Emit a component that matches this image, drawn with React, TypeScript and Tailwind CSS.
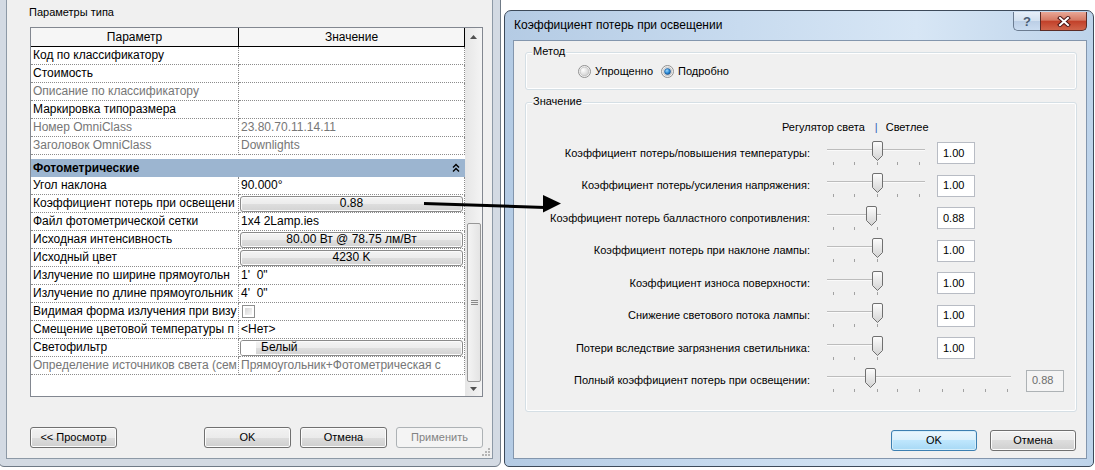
import React from "react";

const btn =
  "flex h-[21px] items-center justify-center rounded-[3px] border border-[#707070] bg-[linear-gradient(to_bottom,#f2f2f2_0%,#ebebeb_50%,#dddddd_50%,#cfcfcf_100%)] shadow-[inset_0_0_0_1px_#fcfcfc] text-[11px] leading-[13px] text-black";

const cellBtn =
  "mx-px flex h-[16px] flex-1 items-center rounded-[3px] border border-[#8a8a8a] bg-[linear-gradient(to_bottom,#f4f4f4_0%,#ececec_50%,#dedede_50%,#d3d3d3_100%)] shadow-[inset_0_0_0_1px_#fbfbfb]";

function GridRow({ label, muted, children }: { label: string; muted?: boolean; children?: React.ReactNode }) {
  const tone = muted ? "text-[#767676]" : "text-black";
  return (
    <div className="flex h-[18px] text-[12px] leading-[17px]">
      <div className={`w-[208px] shrink-0 overflow-hidden whitespace-nowrap border-b border-r border-dotted border-[#8c8c8c] pl-[2px] ${tone}`}>
        {label}
      </div>
      <div className={`flex min-w-0 flex-1 items-center overflow-hidden whitespace-nowrap border-b border-r border-dotted border-[#8c8c8c] ${tone}`}>
        {children}
      </div>
    </div>
  );
}

function Val({ children }: { children: React.ReactNode }) {
  return <span className="pl-[2px]">{children}</span>;
}

function CellButton({ children }: { children: React.ReactNode }) {
  return <div className={`${cellBtn} justify-center`}>{children}</div>;
}

function Scrollbar() {
  return (
    <div className="flex w-[17px] shrink-0 flex-col bg-[linear-gradient(to_right,#e6e6e6,#f4f4f4)]">
      <div className="flex h-[17px] items-center justify-center">
        <svg width="7" height="4" className="block">
          <path d="M0 4 L3.5 0 L7 4Z" fill="#505050" />
        </svg>
      </div>
      <div className="flex flex-1 flex-col justify-end pl-[2px] pr-[1px]">
        <div className="flex h-[159px] items-center justify-center rounded-[2px] border border-[#979797] bg-[linear-gradient(to_right,#f4f4f4,#e4e4e4)]">
          <svg width="7" height="5" className="block">
            <path d="M0 0.5 H7 M0 2.5 H7 M0 4.5 H7" stroke="#8a8a8a" strokeWidth="1" />
          </svg>
        </div>
      </div>
      <div className="flex h-[14px] items-center justify-center">
        <svg width="7" height="4" className="block">
          <path d="M0 0 L3.5 4 L7 0Z" fill="#505050" />
        </svg>
      </div>
    </div>
  );
}

function TypeWindow() {
  return (
    <div className="absolute left-[-2px] top-[-10px] h-[477px] w-[503px] rounded-b-[6px] border border-[#6f7a86] bg-[#d3dae3] p-[7px]">
      <div className="relative flex h-full flex-col border border-[#8d99a6] bg-[#f0f0f0] pl-[23px] pr-[9px]">
        <div className="-ml-px mt-[7px] text-[11px] leading-[13px]">Параметры типа</div>
        <div className="mt-[8px] flex h-[370px] border border-[#828790] bg-white">
          <div className="flex w-[434px] shrink-0 flex-col">
            <div className="flex h-[19px] border-b border-black bg-[#f6f6f6] text-[12px] leading-[18px]">
              <div className="w-[208px] shrink-0 border-r border-black text-center">Параметр</div>
              <div className="flex-1 border-r border-black text-center">Значение</div>
            </div>
            <GridRow label="Код по классификатору" />
            <GridRow label="Стоимость" />
            <GridRow label="Описание по классификатору" muted />
            <GridRow label="Маркировка типоразмера" />
            <GridRow label="Номер OmniClass" muted>
              <Val>23.80.70.11.14.11</Val>
            </GridRow>
            <GridRow label="Заголовок OmniClass" muted>
              <Val>Downlights</Val>
            </GridRow>
            <div className="mt-[4px] flex h-[18px] items-center justify-between bg-[#9cb5d0] pl-[2px] pr-[5px] text-[12px] font-bold leading-[17px]">
              <span>Фотометрические</span>
              <svg width="8" height="10" className="block">
                <path d="M1 4.5 L4 1.5 L7 4.5 M1 8.5 L4 5.5 L7 8.5" stroke="#000" strokeWidth="1.4" fill="none" />
              </svg>
            </div>
            <GridRow label="Угол наклона">
              <Val>90.000°</Val>
            </GridRow>
            <GridRow label="Коэффициент потерь при освещени">
              <CellButton>0.88</CellButton>
            </GridRow>
            <GridRow label="Файл фотометрической сетки">
              <Val>1x4 2Lamp.ies</Val>
            </GridRow>
            <GridRow label="Исходная интенсивность">
              <CellButton>80.00 Вт @ 78.75 лм/Вт</CellButton>
            </GridRow>
            <GridRow label="Исходный цвет">
              <CellButton>4230 K</CellButton>
            </GridRow>
            <GridRow label="Излучение по ширине прямоугольн">
              <Val>1'&nbsp;&nbsp;0"</Val>
            </GridRow>
            <GridRow label="Излучение по длине прямоугольник">
              <Val>4'&nbsp;&nbsp;0"</Val>
            </GridRow>
            <GridRow label="Видимая форма излучения при визу">
              <div className="ml-[3px] h-[13px] w-[13px] border border-[#8e8f8f] bg-white p-[2px]">
                <div className="h-full w-full bg-[linear-gradient(135deg,#d6d6d6,#f7f7f7)]" />
              </div>
            </GridRow>
            <GridRow label="Смещение цветовой температуры п">
              <Val>&lt;Нет&gt;</Val>
            </GridRow>
            <GridRow label="Светофильтр">
              <div className={cellBtn}>
                <div className="h-full w-[15px] rounded-l-[2px] bg-white" />
                <span className="pl-[5px]">Белый</span>
              </div>
            </GridRow>
            <GridRow label="Определение источников света (сем" muted>
              <Val>Прямоугольник+Фотометрическая с</Val>
            </GridRow>
          </div>
          <Scrollbar />
        </div>
        <div className="mt-[30px] flex items-center">
          <div className={`${btn} w-[87px]`}>&lt;&lt; Просмотр</div>
          <div className={`${btn} ml-auto w-[87px]`}>OK</div>
          <div className={`${btn} ml-[9px] w-[87px]`}>Отмена</div>
          <div className="ml-[9px] flex h-[21px] w-[87px] items-center justify-center rounded-[3px] border border-[#adb2b5] bg-[#f4f4f4] text-[11px] text-[#838383]">
            Применить
          </div>
        </div>
        <svg width="10" height="10" className="absolute bottom-[1px] right-[1px] block">
          <g fill="#b5b5b5">
            <rect x="7" y="1" width="2" height="2" />
            <rect x="4" y="4" width="2" height="2" />
            <rect x="7" y="4" width="2" height="2" />
            <rect x="1" y="7" width="2" height="2" />
            <rect x="4" y="7" width="2" height="2" />
            <rect x="7" y="7" width="2" height="2" />
          </g>
        </svg>
      </div>
    </div>
  );
}

function Radio({ checked }: { checked?: boolean }) {
  return (
    <svg width="13" height="13" viewBox="0 0 13 13" className="block shrink-0">
      <defs>
        <radialGradient id="radioIn" cx="0.35" cy="0.35" r="0.8">
          <stop offset="0" stopColor="#ffffff" />
          <stop offset="1" stopColor="#c9c9c9" />
        </radialGradient>
        <radialGradient id="radioDot" cx="0.4" cy="0.35" r="0.75">
          <stop offset="0" stopColor="#9ad6ff" />
          <stop offset="0.55" stopColor="#2b8bd6" />
          <stop offset="1" stopColor="#0c4a8c" />
        </radialGradient>
      </defs>
      <circle cx="6.5" cy="6.5" r="6" fill="#f6f6f6" stroke="#8f8f8f" />
      <circle cx="6.5" cy="6.5" r="4.4" fill="url(#radioIn)" stroke="#b3b3b3" strokeWidth="0.6" />
      {checked && <circle cx="6.5" cy="6.5" r="3" fill="url(#radioDot)" stroke="#1b5490" strokeWidth="0.6" />}
    </svg>
  );
}

const tickX = [6, 27, 50, 70, 92, 115, 136, 158, 180];

function Slider({ width, track, thumb, ticks }: { width: number; track: number; thumb: number; ticks: number }) {
  const t = thumb;
  return (
    <svg width={width} height={25} className="block shrink-0">
      <defs>
        <linearGradient id="thumbGrad" x1="0" y1="0" x2="0" y2="1">
          <stop offset="0" stopColor="#fdfdfd" />
          <stop offset="1" stopColor="#d2d2d2" />
        </linearGradient>
      </defs>
      <rect x="0" y="8" width={track} height="1" fill="#bcbcbc" />
      <rect x="0" y="9" width={track} height="1" fill="#fafafa" />
      {tickX.slice(0, ticks).map((x) => (
        <rect key={x} x={x} y="21" width="1" height="3" fill="#a2a2a2" />
      ))}
      <path
        d={`M${t + 0.5} 2 Q${t + 0.5} 0.5 ${t + 2} 0.5 H${t + 9} Q${t + 10.5} 0.5 ${t + 10.5} 2 V14.5 L${t + 5.5} 19.5 L${t + 0.5} 14.5 Z`}
        fill="url(#thumbGrad)"
        stroke="#707070"
      />
    </svg>
  );
}

const factors = [
  { label: "Коэффициент потерь/повышения температуры:", value: "1.00", track: 98, thumb: 45, ticks: 5 },
  { label: "Коэффициент потерь/усиления напряжения:", value: "1.00", track: 98, thumb: 45, ticks: 5 },
  { label: "Коэффициент потерь балластного сопротивления:", value: "0.88", track: 54, thumb: 39, ticks: 3 },
  { label: "Коэффициент потерь при наклоне лампы:", value: "1.00", track: 54, thumb: 45, ticks: 3 },
  { label: "Коэффициент износа поверхности:", value: "1.00", track: 54, thumb: 45, ticks: 3 },
  { label: "Снижение светового потока лампы:", value: "1.00", track: 54, thumb: 45, ticks: 3 },
  { label: "Потери вследствие загрязнения светильника:", value: "1.00", track: 54, thumb: 45, ticks: 3 },
];

function GroupBox({ title, className, children }: { title: string; className: string; children: React.ReactNode }) {
  return (
    <div className={`relative ml-[11px] mr-[9px] rounded-[3px] border border-[#d5dfe5] shadow-[inset_0_0_0_1px_#ffffff] ${className}`}>
      <span className="absolute left-[6px] top-[-8px] bg-[#f0f0f0] px-px text-[11px] leading-[13px]">{title}</span>
      {children}
    </div>
  );
}

function LossDialog() {
  return (
    <div className="absolute left-[504px] top-[10px] flex h-[457px] w-[590px] flex-col rounded-b-[5px] rounded-t-[7px] border border-[#3d4a5a] bg-[linear-gradient(to_right,#b4cbe4,#c8dbef_40%,#d7e6f5_70%,#bdd3ea)] pb-[7px] pl-[8px] pr-[6px]">
      <div className="flex h-[29px] shrink-0 items-start justify-between">
        <div className="pl-px pt-[7px] text-[12px] leading-[15px]">Коэффициент потерь при освещении</div>
        <div className="mt-px flex">
          <div className="flex h-[19px] w-[27px] items-center justify-center rounded-bl-[5px] border border-r-0 border-t-0 border-[#6b7c91] bg-[linear-gradient(to_bottom,#e6eef8_0%,#d3e1f0_48%,#bccfe6_52%,#cadcf0_100%)] text-[13px] font-bold leading-none text-[#4a5c72]">
            ?
          </div>
          <div className="flex h-[19px] w-[47px] items-center justify-center rounded-br-[5px] border border-t-0 border-[#5a2b26] bg-[linear-gradient(to_bottom,#e9a796_0%,#d57a64_45%,#c2412a_52%,#d0654b_100%)]">
            <svg width="14" height="11" className="block">
              <path d="M3 2 L11 9 M11 2 L3 9" stroke="#4a1414" strokeWidth="4" strokeLinecap="square" />
              <path d="M3 2 L11 9 M11 2 L3 9" stroke="#ffffff" strokeWidth="2" strokeLinecap="square" />
            </svg>
          </div>
        </div>
      </div>
      <div className="flex flex-1 flex-col border border-[#8396ad] bg-[#f0f0f0] text-[11px] leading-[13px]">
        <GroupBox title="Метод" className="mt-[11px] h-[38px]">
          <div className="flex h-full items-center pl-[52px] pt-px">
            <Radio />
            <span className="ml-[4px]">Упрощенно</span>
            <span className="ml-[8px]">
              <Radio checked />
            </span>
            <span className="ml-[4px]">Подробно</span>
          </div>
        </GroupBox>
        <GroupBox title="Значение" className="mt-[12px] h-[310px]">
          <div className="flex pl-[256px] pt-[18px]">
            <span>Регулятор света</span>
            <span className="ml-[10px] text-[#2f63b8]">|</span>
            <span className="ml-[8px]">Светлее</span>
          </div>
          <div className="mt-[3px] flex flex-col">
            {factors.map((f) => (
              <div key={f.label} className="flex h-[32.5px] items-center">
                <div className="w-[284px] shrink-0 whitespace-nowrap text-right">{f.label}</div>
                <div className="ml-[17px]">
                  <Slider width={98} track={f.track} thumb={f.thumb} ticks={f.ticks} />
                </div>
                <div className="ml-[12px] flex h-[22px] w-[38px] items-center border border-[#b8bcc4] bg-white pl-[5px]">
                  {f.value}
                </div>
              </div>
            ))}
            <div className="flex h-[32.5px] items-center">
              <div className="w-[284px] shrink-0 whitespace-nowrap text-right">Полный коэффициент потерь при освещении:</div>
              <div className="ml-[17px]">
                <Slider width={184} track={184} thumb={38} ticks={9} />
              </div>
              <div className="ml-[15px] flex h-[22px] w-[38px] items-center border border-[#adb2b5] bg-[#f4f4f4] pl-[5px] text-[#6d6d6d]">
                0.88
              </div>
            </div>
          </div>
        </GroupBox>
        <div className="mt-[18px] flex justify-end gap-[13px] pr-[10px]">
          <div className="flex h-[21px] w-[86px] items-center justify-center rounded-[3px] border border-[#3c7fb1] bg-[linear-gradient(to_bottom,#eaf6fd_0%,#d9f0fc_50%,#bee6fd_50%,#a7d9f5_100%)] shadow-[inset_0_0_0_1px_#d6eefa]">
            OK
          </div>
          <div className={`${btn} w-[86px]`}>Отмена</div>
        </div>
      </div>
    </div>
  );
}

function Arrow() {
  return (
    <svg width="145" height="24" className="pointer-events-none absolute left-[420px] top-[192px] block">
      <polygon points="4,10 4,13 125,17 125,14" fill="#000" />
      <polygon points="123,3 141,11.5 123,20.5" fill="#000" />
    </svg>
  );
}

export default function App() {
  return (
    <div className="relative h-[470px] w-[1095px] overflow-hidden bg-white font-['Liberation_Sans',Arial,sans-serif] text-black">
      <TypeWindow />
      <LossDialog />
      <Arrow />
    </div>
  );
}
